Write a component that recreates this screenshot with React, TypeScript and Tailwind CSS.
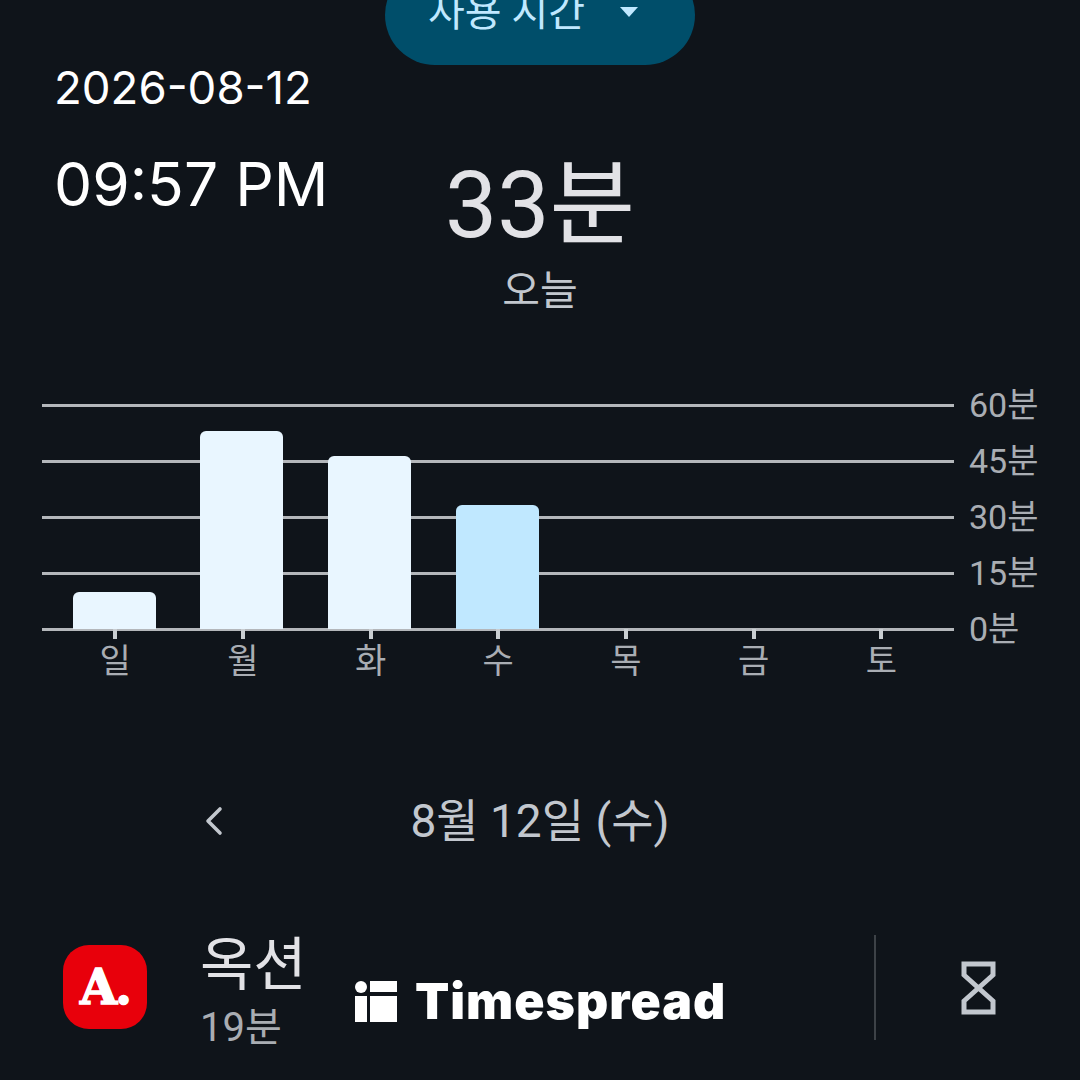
import { ChevronLeft } from 'lucide-react'

const ko = "font-['Roboto','Noto_Sans_CJK_KR',sans-serif]"

const yLabels = ['60분', '45분', '30분', '15분', '0분']

const days = [
    { label: '일', height: 37, color: 'bg-[#e9f6ff]' },
    { label: '월', height: 198, color: 'bg-[#e9f6ff]' },
    { label: '화', height: 173, color: 'bg-[#e9f6ff]' },
    { label: '수', height: 124, color: 'bg-[#c0e8ff]' },
    { label: '목', height: 0, color: '' },
    { label: '금', height: 0, color: '' },
    { label: '토', height: 0, color: '' },
]

function UsageChart() {
    return (
        <div className="relative ml-[42px] w-[1000px]">
            {/* grid lines and minute labels */}
            <div className="flex flex-col gap-[32px]">
                {yLabels.map(label => (
                    <div key={label} className="flex h-[24px] items-center gap-[15px]">
                        <div className="h-[3px] w-[912px] bg-[#b4b7bb]" />
                        <span className={`${ko} text-[34px] leading-none text-[#a9adb3]`}>{label}</span>
                    </div>
                ))}
            </div>
            {/* bars and weekday ticks */}
            <div className="absolute left-[8.3px] top-[11px] flex h-[225px] w-[895px] items-end">
                {days.map(day => (
                    <div key={day.label} className="relative flex h-full w-[127.7px] shrink-0 flex-col items-center justify-end">
                        {day.height > 0 && (
                            <div style={{ height: day.height }} className={`w-[83px] rounded-t-[6px] ${day.color}`} />
                        )}
                        <div className="absolute top-full h-[10px] w-[4px] translate-x-[1px] bg-[#c9cdd1]" />
                        <span className={`${ko} absolute top-[calc(100%+13px)] translate-x-[1px] text-[34px] leading-[38px] text-[#a9adb3]`}>{day.label}</span>
                    </div>
                ))}
            </div>
        </div>
    )
}

function AuctionIcon() {
    return (
        <div className="flex h-[84px] w-[84px] shrink-0 items-center justify-center rounded-[26px] bg-[#e8000b]">
            <span className="font-['DejaVu_Serif',serif] text-[48px] font-bold leading-none tracking-[-2px] text-white [-webkit-text-stroke:1.5px_white]">A.</span>
        </div>
    )
}

function Timespread() {
    return (
        <div className="absolute left-[355px] top-[972px] flex items-center gap-[18px]">
            <svg width="42" height="41" viewBox="0 0 42 41" fill="white">
                <circle cx="6" cy="6" r="6" />
                <rect x="15" y="0" width="27" height="11" />
                <rect x="0" y="15" width="12" height="26" />
                <rect x="15" y="15" width="27" height="26" />
            </svg>
            <span className="font-['Inter',sans-serif] text-[50px] font-black leading-[58px] tracking-[1px] text-white">Timespread</span>
        </div>
    )
}

export default function App() {
    return (
        <div className="relative flex h-[1080px] w-[1080px] flex-col overflow-hidden bg-[#0f141a]">
            {/* dropdown pill, cut off by the top of the screen */}
            <div className="mx-auto -mt-[35px] flex h-[100px] w-[310px] shrink-0 items-start gap-[35px] rounded-[50px] bg-[#004e6a] pl-[43px] pt-[23px]">
                <span className={`${ko} text-[40px] leading-[50px] text-[#c0e8ff]`}>사용 시간</span>
                <svg width="18" height="10" viewBox="0 0 18 10" className="mt-[19px]" fill="#c0e8ff">
                    <path d="M0 0h18L9 10z" />
                </svg>
            </div>

            {/* clock + today's total */}
            <div className="relative h-[255px] shrink-0">
                <div className="absolute left-[54px] top-0 font-['Inter',sans-serif] text-white">
                    <div className="text-[45.6px] leading-[46px]">2026-08-12</div>
                    <div className="mt-[43px] text-[60.5px] leading-[60px]">09:57 PM</div>
                </div>
                <div className="flex flex-col items-center pt-[91px]">
                    <div className={`${ko} text-[93px] leading-[100px] text-[#e2e2e6]`}>33분</div>
                    <div className={`${ko} mt-[12px] text-[41px] leading-[46px] text-[#c2c7ce]`}>오늘</div>
                </div>
            </div>

            <div className="mt-[73px]">
                <UsageChart />
            </div>

            {/* date navigation */}
            <div className="relative mt-[150px] flex h-[60px] items-center justify-center">
                <ChevronLeft className="absolute left-[190px] h-[48px] w-[48px] text-[#c2c7ce]" strokeWidth={1.8} />
                <span className={`${ko} text-[46px] leading-none text-[#c2c7ce]`}>8월 12일 (수)</span>
            </div>

            {/* app row */}
            <div className="mt-[94px] flex items-start pl-[63px]">
                <AuctionIcon />
                <div className="ml-[53px] -mt-[13px] flex flex-col">
                    <span className={`${ko} text-[58px] leading-[66px] text-[#e2e2e6]`}>옥션</span>
                    <span className={`${ko} mt-[7px] text-[40px] leading-[46px] text-[#a9adb3]`}>19분</span>
                </div>
            </div>

            <div className="absolute left-[874px] top-[935px] h-[105px] w-[2px] bg-[#3d4247]" />
            <svg className="absolute left-[961px] top-[961px]" width="35" height="54" viewBox="0 0 35 54" fill="none" stroke="#c2c7ce" strokeWidth="5">
                <path d="M3 3h29v11L3 40v11h29V40L3 14z" />
            </svg>

            <Timespread />
        </div>
    )
}
